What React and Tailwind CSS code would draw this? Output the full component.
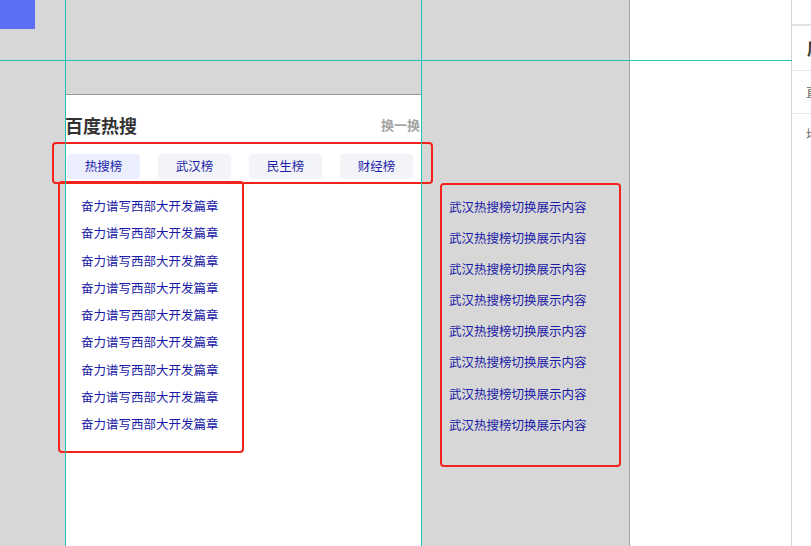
import React from 'react';

const tabs = ['热搜榜', '武汉榜', '民生榜', '财经榜'];
const hotItems = Array(9).fill('奋力谱写西部大开发篇章');
const wuhanItems = Array(8).fill('武汉热搜榜切换展示内容');

const App = () => {
  return (
    <div
      className="relative flex w-[811px] h-[546px] overflow-hidden bg-white"
      style={{ fontFamily: '"Noto Sans CJK SC", "Noto Sans", sans-serif' }}
    >
      {/* Canvas */}
      <div className="relative flex items-start w-[630px] h-full shrink-0 bg-[#d7d7d7] border-r border-[#a6a6a6] pl-[65px] pt-[94px]">
        <div className="absolute left-0 top-0 w-[35px] h-[29px] bg-[#5a6ef6]" />

        {/* Card */}
        <div className="w-[356px] h-[452px] shrink-0 bg-white border-t border-[#9a9a9a]">
          <div className="flex justify-between items-center pt-[18px] pr-[1px]">
            <span className="text-[18px] leading-[24px] font-bold text-[#333]">百度热搜</span>
            <span className="text-[13px] leading-[20px] font-semibold text-[#a3a3a3]">换一换</span>
          </div>
          <div className="flex gap-[18px] ml-[2px] mt-[17px]">
            {tabs.map((t, i) => (
              <div
                key={t}
                className={`w-[73px] h-[25px] flex items-center justify-center rounded-[4px] text-[12.5px] text-[#1e1eaa] ${i === 0 ? 'bg-[#ebeefd]' : 'bg-[#f3f4f8]'}`}
              >
                {t}
              </div>
            ))}
          </div>
          <ul className="mt-[13px] pl-[16px]">
            {hotItems.map((t, i) => (
              <li key={i} className="text-[12.5px] leading-[27.3px] text-[#1a1aa6]">{t}</li>
            ))}
          </ul>
        </div>

        {/* Switched content */}
        <ul className="ml-[28px] mt-[97px]">
          {wuhanItems.map((t, i) => (
            <li key={i} className="text-[12.5px] leading-[31.1px] text-[#1a1aa6]">{t}</li>
          ))}
        </ul>

        {/* Annotation boxes */}
        <div className="absolute left-[52px] top-[142px] w-[381px] h-[42px] border-[2.5px] border-[#f0241c] rounded-[4px]" />
        <div className="absolute left-[58px] top-[181px] w-[186px] h-[272px] border-[2.5px] border-[#f0241c] rounded-[4px]" />
        <div className="absolute left-[440px] top-[183px] w-[181px] h-[284px] border-[2.5px] border-[#f0241c] rounded-[4px]" />
      </div>

      {/* White area */}
      <div className="w-[162px] h-full shrink-0 bg-white border-r border-[#d4d4d4]" />

      {/* Side panel */}
      <div className="flex-1 flex flex-col overflow-hidden">
        <div className="h-[26px] border-b-2 border-[#e3e3e3]" />
        <div className="h-[45px] flex items-center pl-[15px] border-b border-[#e6e6e6] whitespace-nowrap text-[16px] font-bold text-[#333]">
          属性
        </div>
        <div className="h-[43px] flex items-center pl-[14px] border-b border-[#e6e6e6] whitespace-nowrap text-[12px] text-[#666]">
          直线
        </div>
        <div className="h-[40px] flex items-center pl-[14px] whitespace-nowrap text-[12px] text-[#666]">
          均分
        </div>
      </div>

      {/* Guides */}
      <div className="absolute z-10 left-[64.5px] top-0 w-[1.5px] h-full bg-[#1fc2b8]" />
      <div className="absolute z-10 left-[420.5px] top-0 w-[1.5px] h-full bg-[#1fc2b8]" />
      <div className="absolute z-10 left-0 top-[60px] w-[792px] h-px bg-[#1fc2b8]" />
    </div>
  );
};

export default App;
